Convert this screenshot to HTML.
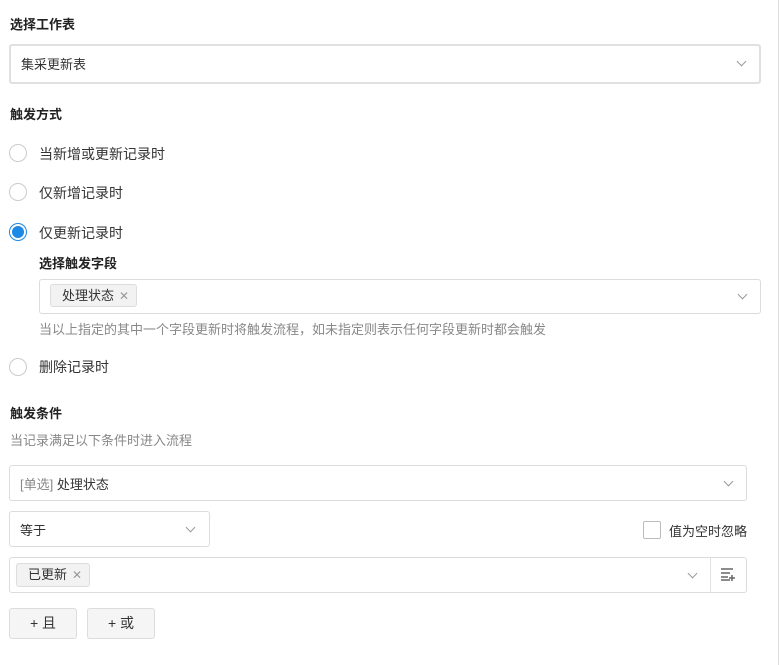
<!DOCTYPE html>
<html><head><meta charset="utf-8"><style>
*{box-sizing:border-box;margin:0;padding:0}
body{width:780px;height:665px;background:#fff;font-family:"Liberation Sans","Noto Sans CJK SC",sans-serif;color:#333;font-size:14px;position:relative;overflow:hidden}
.a{position:absolute}
.t{font-weight:bold;font-size:13px;color:#222}
.box{position:absolute;border:1px solid #dcdcdc;border-radius:3px;background:#fff}
.chev{position:absolute;width:7px;height:7px;border-right:1px solid #999;border-bottom:1px solid #999;transform:rotate(45deg)}
.radio{position:absolute;left:9px;width:18px;height:18px;border:1px solid #ccc;border-radius:50%}
.tag{position:absolute;background:#f2f2f2;border:1px solid #ddd;border-radius:3px;font-size:13px;line-height:21px;padding-left:11px;color:#333}
.x{color:#999;font-size:12px;margin-left:5px}
.btn{position:absolute;top:608px;width:68px;height:31px;background:#f5f5f5;border:1px solid #dcdcdc;border-radius:3px;text-align:center;line-height:29px;font-size:14px}
</style></head><body>
<div class="a" style="right:1px;top:0;width:1px;height:665px;background:#ddd"></div>
<div class="a t" style="left:10px;top:14px">选择工作表</div>
<div class="box" style="left:9px;top:44px;width:752px;height:40px;border:2px solid #e0e0e0"></div>
<div class="a" style="left:21px;top:54px;font-size:13px">集采更新表</div>
<div class="chev" style="left:738px;top:58px"></div>
<div class="a t" style="left:10px;top:104px">触发方式</div>
<div class="radio" style="top:144px"></div><div class="a" style="left:39px;top:144px">当新增或更新记录时</div>
<div class="radio" style="top:183px"></div><div class="a" style="left:39px;top:183px">仅新增记录时</div>
<div class="radio" style="top:223px;border:1px solid #1e88e5"><div class="a" style="left:2px;top:2px;width:12px;height:12px;border-radius:50%;background:#1e88e5"></div></div><div class="a" style="left:39px;top:223px">仅更新记录时</div>
<div class="a t" style="left:39px;top:253px">选择触发字段</div>
<div class="box" style="left:39px;top:279px;width:722px;height:35px"></div>
<div class="tag" style="left:50px;top:284px;width:87px;height:23px">处理状态<span class="x">✕</span></div>
<div class="chev" style="left:739px;top:291px"></div>
<div class="a" style="left:39px;top:319px;font-size:13px;color:#888">当以上指定的其中一个字段更新时将触发流程，如未指定则表示任何字段更新时都会触发</div>
<div class="radio" style="top:358px"></div><div class="a" style="left:39px;top:357px">删除记录时</div>
<div class="a t" style="left:10px;top:403px">触发条件</div>
<div class="a" style="left:10px;top:430px;font-size:13px;color:#888">当记录满足以下条件时进入流程</div>
<div class="box" style="left:9px;top:465px;width:738px;height:36px"></div>
<div class="a" style="left:20px;top:474px;font-size:13px"><span style="color:#888">[单选]</span> 处理状态</div>
<div class="chev" style="left:725px;top:478px"></div>
<div class="box" style="left:9px;top:511px;width:201px;height:36px"></div>
<div class="a" style="left:20px;top:520px;font-size:13px">等于</div>
<div class="chev" style="left:187px;top:524px"></div>
<div class="a" style="left:643px;top:521px;width:18px;height:18px;border:1px solid #bbb;border-radius:2px"></div>
<div class="a" style="left:669px;top:521px;font-size:13px">值为空时忽略</div>
<div class="box" style="left:9px;top:557px;width:738px;height:36px"></div>
<div class="a" style="left:710px;top:558px;width:1px;height:34px;background:#e0e0e0"></div>
<div class="tag" style="left:16px;top:563px;width:74px;height:24px">已更新<span class="x">✕</span></div>
<div class="chev" style="left:689px;top:570px"></div>
<svg class="a" style="left:720px;top:567px" width="16" height="14" viewBox="0 0 16 14"><path d="M1 2h12M1 6h9M1 10h7M1 13h9M12 8v6M9 11h6" stroke="#666" stroke-width="1.5" fill="none"/></svg>
<div class="btn" style="left:9px">+ 且</div>
<div class="btn" style="left:87px">+ 或</div>
</body></html>
